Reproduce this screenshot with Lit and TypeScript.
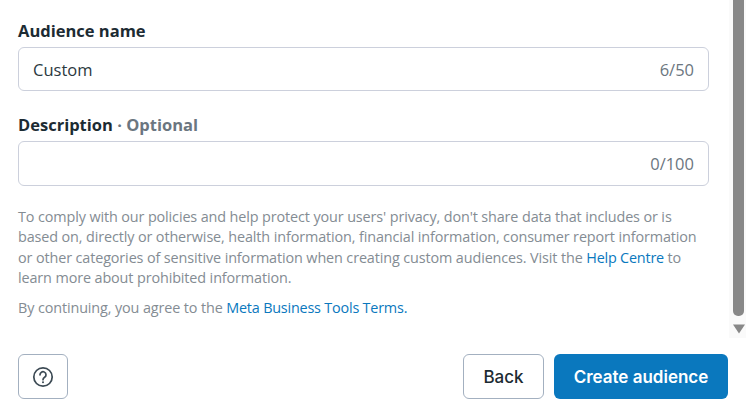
import { LitElement, html, css } from "lit";
import { customElement } from "lit/decorators.js";

@customElement("app-root")
export class AppRoot extends LitElement {
  static styles = css`
    :host { display: block; width: 746px; height: 413px; background: #fff; overflow: hidden; font-family: "Open Sans", "Noto Sans", sans-serif; color: #1c2b33; }
    .top { display: flex; height: 338px; }
    .content { flex: 1; min-width: 0; padding: 20px 20px 0 18px; box-sizing: border-box; }
    .label { font-size: 16.5px; font-weight: 700; line-height: 22px; height: 22px; margin-bottom: 5px; }
    .label.second { margin-top: 23px; margin-bottom: 5px; }
    .opt { color: #6b7680; }
    .input { height: 44px; box-sizing: border-box; border: 1px solid #ccd0dc; border-radius: 6px; display: flex; align-items: center; justify-content: space-between; padding: 1px 14px 0; font-size: 16.5px; color: #2b3840; }
    .input.tall { height: 45px; padding-top: 0; }
    .count { color: #6b7680; }
    .help { margin-top: 21px; font-size: 14.4px; line-height: 20.4px; color: #848c93; letter-spacing: -0.12px; }
    .terms { margin-top: 9px; }
    a { color: #0a78be; text-decoration: none; letter-spacing: -0.2px; }
    .footer { display: flex; align-items: flex-start; padding: 16px 18px 0; gap: 10px; }
    .spacer { flex: 1; }
    button { height: 45px; box-sizing: border-box; border-radius: 6px; font-family: Inter, sans-serif; font-size: 17px; font-weight: 500; cursor: pointer; display: flex; align-items: center; justify-content: center; padding: 0; }
    .ghost { background: #fff; border: 1px solid #a3b0c0; color: #1c2b33; }
    .icon { width: 50px; }
    .back { width: 81px; }
    .primary { width: 174px; background: #0a78be; border: none; color: #fff; font-weight: 600; }
    .bar { width: 17px; box-sizing: border-box; padding-left: 4px; background: #fafafa; height: 338px; display: flex; flex-direction: column; align-items: flex-start; }
    .thumb { width: 11px; height: 316px; background: #888; border-radius: 0 0 5px 5px; }
    .arrow { margin-top: 8px; }
  `;

  render() {
    return html`
      <div class="top">
        <div class="content">
          <div class="label">Audience name</div>
          <div class="input"><span>Custom</span><span class="count">6/50</span></div>
          <div class="label second">Description <span class="opt">· Optional</span></div>
          <div class="input tall"><span></span><span class="count">0/100</span></div>
          <div class="help">To comply with our policies and help protect your users' privacy, don't share data that includes or is based on, directly or otherwise, health information, financial information, consumer report information or other categories of sensitive information when creating custom audiences. Visit the <a>Help Centre</a> to learn more about prohibited information.</div>
          <div class="help terms">By continuing, you agree to the <a>Meta Business Tools Terms.</a></div>
        </div>
        <div class="bar">
          <div class="thumb"></div>
          <svg class="arrow" width="12" height="10" viewBox="0 0 12 10"><path d="M0 0.5h12L6 9.5z" fill="#888"></path></svg>
        </div>
      </div>
      <div class="footer">
        <button class="ghost icon" aria-label="Help">
          <svg width="22" height="22" viewBox="0 0 22 22" fill="none" stroke="#3c4a54" stroke-width="1.7">
            <circle cx="11" cy="11" r="9.2"></circle>
            <path d="M8 8.8a3 3 0 1 1 4.6 2.5c-1 .7-1.6 1.2-1.6 2.4" stroke-linecap="round"></path>
            <circle cx="11" cy="16.2" r="1" fill="#3c4a54" stroke="none"></circle>
          </svg>
        </button>
        <div class="spacer"></div>
        <button class="ghost back">Back</button>
        <button class="primary">Create audience</button>
      </div>`;
  }
}
